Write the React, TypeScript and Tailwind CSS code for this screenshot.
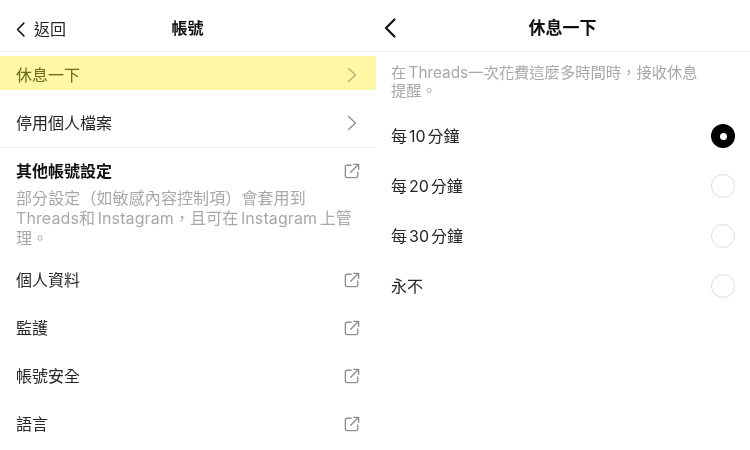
const FONT = "font-['Inter','Noto_Sans_CJK_TC',sans-serif]";

function Chevron({ className = "" }: { className?: string }) {
  return (
    <svg width="10" height="16" viewBox="0 0 10 16" fill="none" stroke="currentColor" strokeWidth="1.3" strokeLinecap="round" strokeLinejoin="round" className={className}>
      <path d="M1.5 1.5 8.5 8 1.5 14.5" />
    </svg>
  );
}

function Back({ w, h, sw }: { w: number; h: number; sw: number }) {
  return (
    <svg width={w} height={h} viewBox="0 0 12 20" fill="none" stroke="#111" strokeWidth={sw} strokeLinecap="round" strokeLinejoin="round">
      <path d="M10.5 1.5 2 10l8.5 8.5" />
    </svg>
  );
}

function External() {
  return (
    <svg width="16" height="16" viewBox="0 0 18 18" fill="none" stroke="#8e8e8e" strokeWidth="1.5" strokeLinecap="round" strokeLinejoin="round">
      <path d="M8 2.5H3.5a2 2 0 0 0-2 2v10a2 2 0 0 0 2 2h10a2 2 0 0 0 2-2V10" />
      <path d="M7.5 10.5 16.5 1.5M11 1.5h5.5V7" />
    </svg>
  );
}

function LinkRow({ label }: { label: string }) {
  return (
    <div className="flex h-12 items-center justify-between pl-4 pr-[15px] text-base text-[#262626]">
      <span>{label}</span>
      <External />
    </div>
  );
}

function Radio({ label, on }: { label: string; on?: boolean }) {
  return (
    <div className="flex h-[50px] items-center justify-between pl-4 pr-[15px] text-base text-[#262626] [word-spacing:-2.5px]">
      <span>{label}</span>
      {on ? (
        <span className="flex h-6 w-6 items-center justify-center rounded-full bg-black">
          <span className="h-[7px] w-[7px] rounded-full bg-white" />
        </span>
      ) : (
        <span className="h-6 w-6 rounded-full border-[1.5px] border-[#dcdcdc]" />
      )}
    </div>
  );
}

export default function App() {
  return (
    <div className={`flex h-[450px] w-[750px] overflow-hidden bg-white blur-[0.35px] ${FONT}`}>
      <div className="w-[375px] shrink-0">
        <header className="relative flex h-[52px] items-center justify-center border-b border-[#f0f0f0]">
          <div className="absolute left-4 top-[21px] flex items-center gap-[9px] text-base leading-4 text-[#262626]">
            <Back w={9} h={15} sw={2} />
            <span>返回</span>
          </div>
          <span className="pt-[5px] text-base font-bold text-[#111]">帳號</span>
        </header>
        <div className="mb-[9px] mt-[4px] flex h-[34px] w-[376px] items-center justify-between bg-[#fef7a3] pl-4 pr-[19px] pt-[4px] text-base text-[#6d6a1f]">
          <span>休息一下</span>
          <Chevron className="text-[#b3b07a]" />
        </div>
        <div className="flex h-[49px] items-center justify-between border-b border-[#efefef] pb-px pl-4 pr-[18px] text-base text-[#262626]">
          <span>停用個人檔案</span>
          <Chevron className="text-[#8e8e8e]" />
        </div>
        <div className="flex h-[35px] items-end justify-between pl-4 pr-[15px]">
          <span className="text-base font-bold leading-6 text-[#111]">其他帳號設定</span>
          <span className="pb-[4px]"><External /></span>
        </div>
        <p className="mb-[8px] pl-4 pr-[12px] pt-[5px] text-base leading-[20px] tracking-[0.1px] text-[#a8a8a8] [word-spacing:-2px]">
          部分設定（如敏感內容控制項）會套用到 Threads和 Instagram，且可在 Instagram 上管理。
        </p>
        <LinkRow label="個人資料" />
        <LinkRow label="監護" />
        <LinkRow label="帳號安全" />
        <LinkRow label="語言" />
      </div>
      <div className="w-[375px] shrink-0">
        <header className="relative flex h-[52px] items-center justify-center border-b border-[#f0f0f0]">
          <div className="absolute left-[9px] top-[18px]">
            <Back w={12} h={20} sw={2.2} />
          </div>
          <span className="pt-[7px] text-[17px] font-bold text-[#111]">休息一下</span>
        </header>
        <p className="w-[330px] pl-4 pt-[12px] text-[15.3px] leading-[18px] text-[#a8a8a8] [word-spacing:-2px]">
          在 Threads一次花費這麼多時間時，接收休息提醒。
        </p>
        <div className="mt-[11px]">
          <Radio label="每 10 分鐘" on />
          <Radio label="每 20 分鐘" />
          <Radio label="每 30 分鐘" />
          <Radio label="永不" />
        </div>
      </div>
    </div>
  );
}
